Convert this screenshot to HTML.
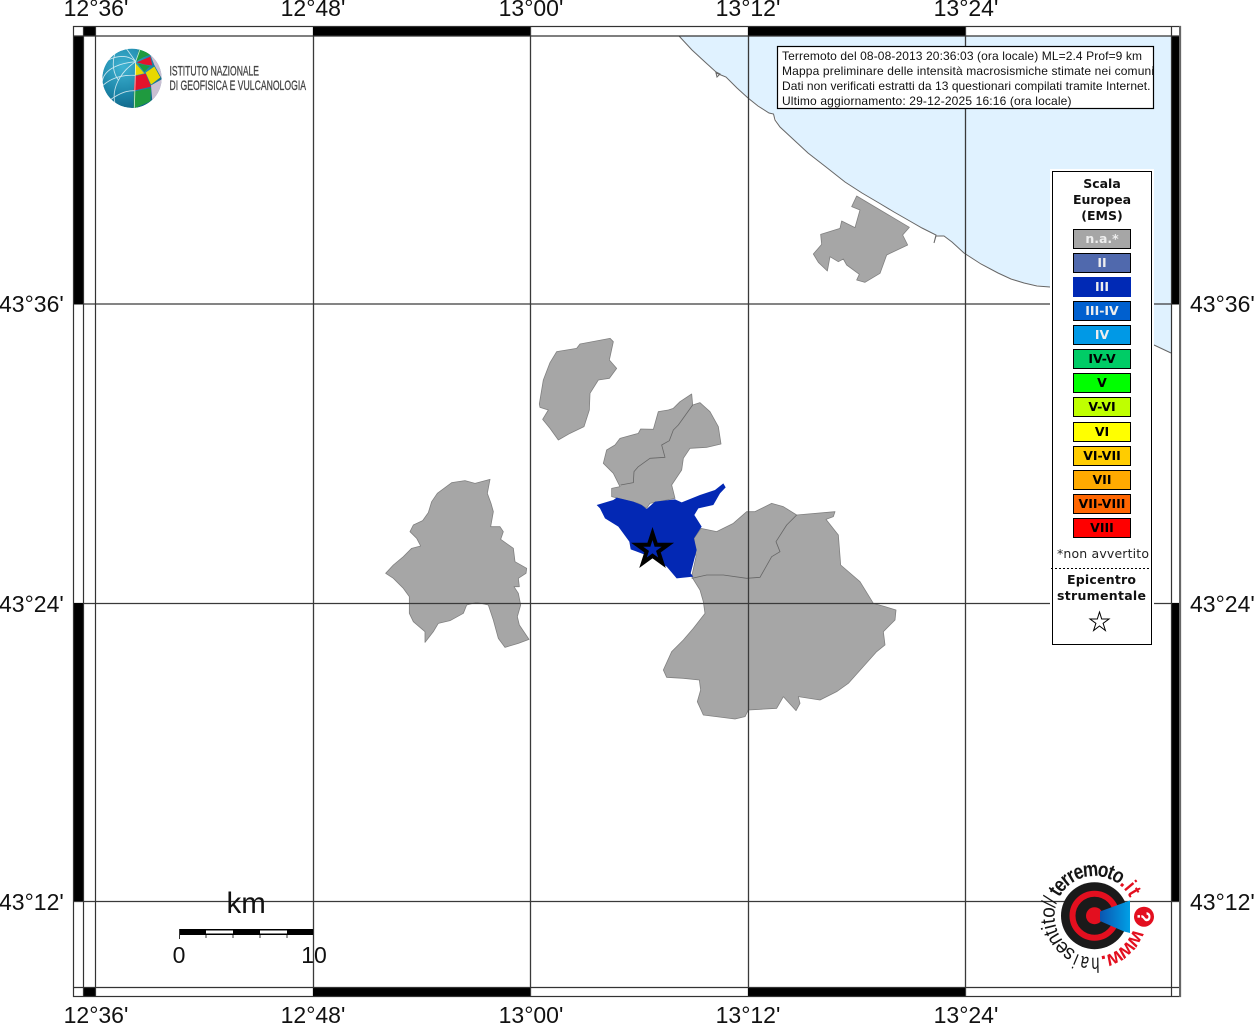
<!DOCTYPE html>
<html><head><meta charset="utf-8"><style>
html,body{margin:0;padding:0;background:#fff}
svg{display:block;filter:blur(.35px)}
.l{font-family:"Liberation Sans",sans-serif;font-size:23px;fill:#111}
.b{font-family:"DejaVu Sans",sans-serif;font-weight:bold;font-size:12.5px;text-anchor:middle}
.i{font-family:"Liberation Sans",sans-serif;font-size:12px;fill:#111}
.t{font-family:"Liberation Sans",sans-serif;font-size:21px;text-anchor:middle;fill:#151515}
.tb{font-weight:bold}
.r{fill:#e30f1f;font-weight:bold}
</style></head><body>
<svg width="1254" height="1024" viewBox="0 0 1254 1024" xmlns="http://www.w3.org/2000/svg">
<defs>
<clipPath id="box"><rect x="778" y="47" width="375.5" height="61"/></clipPath>
<clipPath id="g"><circle cx="111" cy="115" r="89"/></clipPath>
<radialGradient id="gl" cx=".35" cy=".3" r=".85"><stop offset="0" stop-color="#3fb3d2"/><stop offset=".55" stop-color="#1c85a8"/><stop offset="1" stop-color="#0d5a7c"/></radialGradient>
<linearGradient id="cone" x1="0" y1="0" x2="1" y2="0"><stop offset="0" stop-color="#0b55b0"/><stop offset="1" stop-color="#00a0e6"/></linearGradient>
</defs>
<rect width="1254" height="1024" fill="#fff"/>
<!-- sea -->
<path fill="#e0f2ff" stroke="none" d="M679,36 692,50 716,72 726,77 748,98 769,113 773.5,114 780,127 808,153 845,182 879,203 908,220 936,235 944,236 964,253 998,273 1024,283 1050,287 1154,345 1171,353 1171,36Z"/>
<path fill="none" stroke="#666" stroke-width="1" d="M679,36 692,50 705,62 716,72 720,74 717,77 716,73 726,77 737,88 748,98 758,106 769,113 773.5,114 775,120 780,127 794,140 808,153 826,167 845,182 862,193 879,203 894,212 908,220 922,228 936,235 934,243 936,236 944,236 952,242 964,253 981,264 998,273 1011,279 1024,283 1037,286 1050,287 M1154,345 1171,353"/>
<!-- regions -->
<g fill="#a6a6a6" stroke="#808080" stroke-width="2.4" stroke-linejoin="round" transform="translate(380,330) scale(.33333)">
<path d="M17,730 40,705 70,680 95,655 122,648 110,625 90,605 100,585 128,572 145,548 155,515 172,490 215,458 255,452 285,460 330,448 322,490 333,520 340,545 332,590 360,590 370,605 362,628 400,655 405,695 440,715 438,730 415,745 418,770 402,770 415,790 422,825 412,860 418,885 447,928 415,940 375,952 355,925 340,870 325,825 290,817 260,825 250,850 210,872 175,880 160,905 135,937 135,905 100,875 88,850 88,800 70,775 40,745Z"/>
<path d="M478,222 490,150 510,98 530,65 590,55 600,42 690,25 700,35 688,90 710,115 688,145 655,150 630,190 628,240 612,290 570,310 535,330 510,295 488,268 505,240 480,232Z"/>
<path d="M670,400 680,360 705,345 720,325 775,310 782,297 820,298 835,245 865,240 880,235 900,215 935,192 938,225 960,218 990,245 1015,290 1023,342 980,352 930,355 910,385 905,420 875,465 885,505 810,520 800,535 775,520 695,500 695,475 720,470 700,430Z"/>
<path fill="none" stroke="#666" d="M722,465 760,458 762,425 775,410 810,385 855,382 845,345 868,332 880,300 895,285 938,225"/>
</g>
<g fill="#a6a6a6" stroke="#808080" stroke-width="2.4" stroke-linejoin="round" transform="translate(590,470) scale(.33333)">
<path d="M333,175 380,185 430,160 470,125 495,125 545,100 580,110 620,135 735,125 730,140 708,148 745,195 752,285 810,335 850,400 885,410 918,420 915,450 880,485 885,525 860,545 775,640 740,665 690,690 625,680 630,700 618,722 580,680 560,715 475,720 465,740 435,747 340,735 322,695 332,660 328,630 280,625 230,622 220,600 245,545 280,510 310,475 345,430 340,395 330,360 305,320 318,260 312,205Z"/>
<path fill="none" stroke="#666" d="M305,325 350,315 400,315 470,325 510,322 545,260 570,245 558,215 590,165 620,135"/>
</g>
<g fill="#a6a6a6" stroke="#808080" stroke-width="2.4" stroke-linejoin="round" transform="translate(800,185) scale(.33333)">
<path d="M170,33 328,127 308,150 323,180 260,210 240,265 195,292 170,285 178,268 140,240 130,222 115,230 90,215 82,258 55,232 40,207 65,178 62,148 120,130 125,108 165,128 180,75 155,65Z"/>
</g>
<path fill="#0328b4" transform="translate(380,330) scale(.33333)" d="M650,525 700,510 710,503 760,515 785,525 800,537 825,515 885,508 905,517 960,495 1005,480 1030,460 1037,472 1020,490 1000,525 955,535 943,555 965,590 942,625 950,660 932,730 940,740 890,745 860,710 810,680 752,658 748,635 715,590 675,565 660,535Z"/>
<!-- grid -->
<g stroke="#3a3a3a" stroke-width="1.3" fill="none">
<path d="M313.5,26V997M530.5,26V997M748.5,26V997M965.5,26V997"/>
<path d="M73,304H1181M73,603.5H1181M73,901.5H1181"/>
</g>
<!-- frame bands -->
<g fill="#000">
<rect x="83" y="26" width="12" height="10"/><rect x="313" y="26" width="217" height="10"/><rect x="748" y="26" width="217" height="10"/>
<rect x="83" y="987" width="12" height="10"/><rect x="313" y="987" width="217" height="10"/><rect x="748" y="987" width="217" height="10"/>
<rect x="73" y="36" width="10" height="268"/><rect x="73" y="603" width="10" height="298"/>
<rect x="1171" y="36" width="10" height="268"/><rect x="1171" y="603" width="10" height="298"/>
</g>
<g stroke="#333" fill="none" stroke-width="1.2">
<rect x="73.5" y="26.5" width="1107" height="970"/>
<path d="M83.5,26V997M95.5,26V997M1171.5,26V997M73,36H1181M73,987.5H1181"/>
</g>
<path d="M1180,26V997" stroke="#666" stroke-width="2"/>
<!-- axis labels -->
<g class="l" text-anchor="middle">
<text x="96" y="16">12°36'</text><text x="313" y="16">12°48'</text><text x="531" y="16">13°00'</text><text x="748" y="16">13°12'</text><text x="966" y="16">13°24'</text>
<text x="96" y="1023">12°36'</text><text x="313" y="1023">12°48'</text><text x="531" y="1023">13°00'</text><text x="748" y="1023">13°12'</text><text x="966" y="1023">13°24'</text>
</g>
<g class="l">
<text x="-1" y="312">43°36'</text><text x="-1" y="612">43°24'</text><text x="-1" y="910">43°12'</text>
<text x="1190" y="312">43°36'</text><text x="1190" y="612">43°24'</text><text x="1190" y="910">43°12'</text>
</g>
<!-- star -->
<polygon points="652.5,533.5 656.1,544.7 667.9,544.7 658.4,551.6 662,562.8 652.5,555.9 643,562.8 646.6,551.6 637.1,544.7 648.9,544.7" fill="#0328b4" stroke="#000" stroke-width="4" stroke-miterlimit="10"/>
<!-- INGV logo -->
<g transform="translate(95,40) scale(.33333)">
<g clip-path="url(#g)">
<circle cx="111" cy="115" r="89" fill="url(#gl)"/>
<path fill="#c9bfd2" d="M165,42 205,80 200,115 178,75Z"/>
<path fill="#c9bfd2" d="M168,136 200,118 198,170 172,184Z"/>
<path fill="#1f9a3f" d="M122,65 132,28 170,42 145,52Z"/>
<path fill="#e3122c" d="M125,67 166,50 172,76 150,74Z"/>
<path fill="#e8d800" d="M120,68 148,100 120,106Z"/>
<path fill="#1f9a3f" d="M128,70 165,78 148,96Z"/>
<path fill="#e8d800" d="M152,98 178,80 196,112 168,134Z"/>
<path fill="#e3122c" d="M120,108 152,101 168,140 116,152Z"/>
<path fill="#1f9a3f" d="M116,155 168,144 166,184 116,206Z"/>
<g fill="none" stroke="#fff" stroke-width="2.6" opacity=".75">
<path d="M122,65 118,205"/><path d="M122,65C70,100 50,150 60,190"/><path d="M122,65C60,70 25,95 22,125"/>
<path d="M122,65 135,28"/><path d="M122,65 95,27"/>
<path d="M40,60C70,45 100,45 122,65"/><path d="M25,135C60,105 100,105 120,106"/><path d="M45,180C80,155 100,152 118,152"/>
<path d="M60,40C50,70 55,100 70,120"/>
</g>
</g>
</g>
<g fill="#444" stroke="#444" stroke-width=".3" font-family="'Liberation Sans',sans-serif" font-size="14px">
<text x="169.5" y="75.5" textLength="89.5" lengthAdjust="spacingAndGlyphs">ISTITUTO NAZIONALE</text>
<text x="169.5" y="90" textLength="136.5" lengthAdjust="spacingAndGlyphs">DI GEOFISICA E VULCANOLOGIA</text>
</g>
<!-- info box -->
<rect x="777.5" y="46.5" width="376" height="62" fill="#fff" stroke="#000" stroke-width="1.2"/>
<g class="i" clip-path="url(#box)">
<text x="782" y="60" textLength="360">Terremoto del 08-08-2013 20:36:03 (ora locale) ML=2.4 Prof=9 km</text>
<text x="782" y="75" textLength="372">Mappa preliminare delle intensità macrosismiche stimate nei comuni</text>
<text x="782" y="90" textLength="368.5">Dati non verificati estratti da 13 questionari compilati tramite Internet.</text>
<text x="782" y="105" textLength="289.5">Ultimo aggiornamento: 29-12-2025 16:16 (ora locale)</text>
</g>
<!-- legend -->
<rect x="1050" y="169" width="104" height="477" fill="#fff"/>
<rect x="1052.5" y="171.5" width="99" height="473" fill="#fff" stroke="#000"/>
<g class="b" fill="#111">
<text x="1102" y="188">Scala</text><text x="1102" y="204">Europea</text><text x="1102" y="220">(EMS)</text>
</g>
<g stroke="#000" stroke-width="1">
<rect x="1073.5" y="229.5" width="57" height="19" fill="#a6a6a6"/>
<rect x="1073.5" y="253.5" width="57" height="19" fill="#5069ad"/>
<rect x="1073" y="277" width="58" height="20" fill="#0029b5" stroke="none"/>
<rect x="1073.5" y="301.5" width="57" height="19" fill="#0060cf"/>
<rect x="1073.5" y="325.5" width="57" height="19" fill="#0099e6"/>
<rect x="1073.5" y="349.5" width="57" height="19" fill="#00cc66"/>
<rect x="1073.5" y="373.5" width="57" height="19" fill="#00ff00"/>
<rect x="1073.5" y="397.5" width="57" height="19" fill="#bfff00"/>
<rect x="1073.5" y="422.5" width="57" height="19" fill="#ffff00"/>
<rect x="1073.5" y="446.5" width="57" height="19" fill="#ffcc00"/>
<rect x="1073.5" y="470.5" width="57" height="19" fill="#ffaa00"/>
<rect x="1073.5" y="494.5" width="57" height="19" fill="#ff6600"/>
<rect x="1073.5" y="518.5" width="57" height="19" fill="#ff0000"/>
</g>
<g class="b" fill="#eee">
<text x="1102" y="243">n.a.*</text><text x="1102" y="267">II</text><text x="1102" y="291">III</text><text x="1102" y="315">III-IV</text><text x="1102" y="339">IV</text>
</g>
<g class="b" fill="#000">
<text x="1102" y="363">IV-V</text><text x="1102" y="387">V</text><text x="1102" y="411">V-VI</text><text x="1102" y="436">VI</text><text x="1102" y="460">VI-VII</text><text x="1102" y="484">VII</text><text x="1102" y="508">VII-VIII</text><text x="1102" y="532">VIII</text>
</g>
<text x="1057" y="558" font-family="'DejaVu Sans',sans-serif" font-size="12.5px" fill="#222" textLength="92">*non avvertito</text>
<path d="M1051,568.5H1150" stroke="#000" stroke-dasharray="2 2" fill="none"/>
<g class="b" fill="#111"><text x="1101.5" y="584" textLength="69">Epicentro</text><text x="1101.5" y="600" textLength="89">strumentale</text></g>
<polygon points="1099.5,612 1101.7,619 1109,619 1103.1,623.3 1105.4,630.5 1099.5,626 1093.6,630.5 1095.9,623.3 1090,619 1097.3,619" fill="#fff" stroke="#000" stroke-width="1"/>
<!-- scale -->
<text x="226.5" y="913" font-family="'Liberation Sans',sans-serif" font-size="29.5px" fill="#111">km</text>
<g>
<rect x="179" y="929" width="135" height="6" fill="#000"/>
<rect x="206" y="930.5" width="27" height="3" fill="#fff"/>
<rect x="260" y="930.5" width="27" height="3" fill="#fff"/>
<path d="M179.5,929V939M206,935V938M233,935V938M260,935V938M287,935V938M313.5,929V939" stroke="#333" stroke-width="1"/>
</g>
<text x="179" y="963" class="l" text-anchor="middle">0</text>
<text x="314" y="963" class="l" text-anchor="middle">10</text>
<!-- terremoto logo -->
<circle cx="1094.5" cy="915.7" r="33.5" fill="#1a1a1a"/>
<circle cx="1094.5" cy="915.7" r="22" fill="none" stroke="#e30f1f" stroke-width="6"/>
<circle cx="1094.5" cy="915.7" r="8.5" fill="#e30f1f"/>
<path d="M1100,911.5 1130,900.5V933L1124,931.5 1100,921Z" fill="url(#cone)"/>
<circle cx="1144" cy="916.7" r="10" fill="#e30f1f"/>
<text x="1144" y="923" font-family="'Liberation Sans',sans-serif" font-weight="bold" font-size="18px" fill="#fff" text-anchor="middle" transform="rotate(90 1144 916.7)">?</text>
<g transform="translate(1094.5,915.7)">
<text class="t r" transform="rotate(119) translate(0,-41) scale(.95,1)">w</text>
<text class="t r" transform="rotate(137) translate(0,-41) scale(.95,1)">w</text>
<text class="t r" transform="rotate(155) translate(0,-41) scale(.95,1)">w</text>
<text class="t r" fill="#e30f1f" transform="rotate(168) translate(0,-41)">.</text>
<text class="t" transform="rotate(179) translate(0,-42) scale(.7,1)">h</text>
<text class="t" transform="rotate(192) translate(0,-42) scale(.7,1)">a</text>
<text class="t" transform="rotate(203) translate(0,-42) scale(.7,1)">i</text>
<text class="t" transform="rotate(214) translate(0,-40) scale(.9,1)">s</text>
<text class="t" transform="rotate(226) translate(0,-40) scale(.9,1)">e</text>
<text class="t" transform="rotate(239) translate(0,-40) scale(.9,1)">n</text>
<text class="t" transform="rotate(249) translate(0,-40) scale(.9,1)">t</text>
<text class="t" transform="rotate(256) translate(0,-40) scale(.9,1)">i</text>
<text class="t" transform="rotate(263) translate(0,-40) scale(.9,1)">t</text>
<text class="t" transform="rotate(274) translate(0,-40) scale(.9,1)">o</text>
<text class="t" transform="rotate(284) translate(0,-40) scale(.8,1)">/</text>
<text class="t" transform="rotate(290) translate(0,-40) scale(.8,1)">/</text>
<text class="t tb" transform="rotate(-58.4) translate(0,-39.7) scale(.82,1)">t</text>
<text class="t tb" transform="rotate(-48.9) translate(0,-39.7) scale(.82,1)">e</text>
<text class="t tb" transform="rotate(-38.9) translate(0,-39.7) scale(.82,1)">r</text>
<text class="t tb" transform="rotate(-30.5) translate(0,-39.7) scale(.82,1)">r</text>
<text class="t tb" transform="rotate(-20.4) translate(0,-39.7) scale(.82,1)">e</text>
<text class="t tb" transform="rotate(-5) translate(0,-39.7) scale(.82,1)">m</text>
<text class="t tb" transform="rotate(11) translate(0,-39.7) scale(.82,1)">o</text>
<text class="t tb" transform="rotate(21) translate(0,-39.7) scale(.82,1)">t</text>
<text class="t tb" transform="rotate(31.2) translate(0,-39.7) scale(.82,1)">o</text>
<text class="t r" transform="rotate(42) translate(0,-39.7)">.</text>
<text class="t r" transform="rotate(50) translate(0,-39.7) scale(.85,1)">i</text>
<text class="t r" transform="rotate(59) translate(0,-39.7) scale(.85,1)">t</text>
</g>
</svg>
</body></html>
